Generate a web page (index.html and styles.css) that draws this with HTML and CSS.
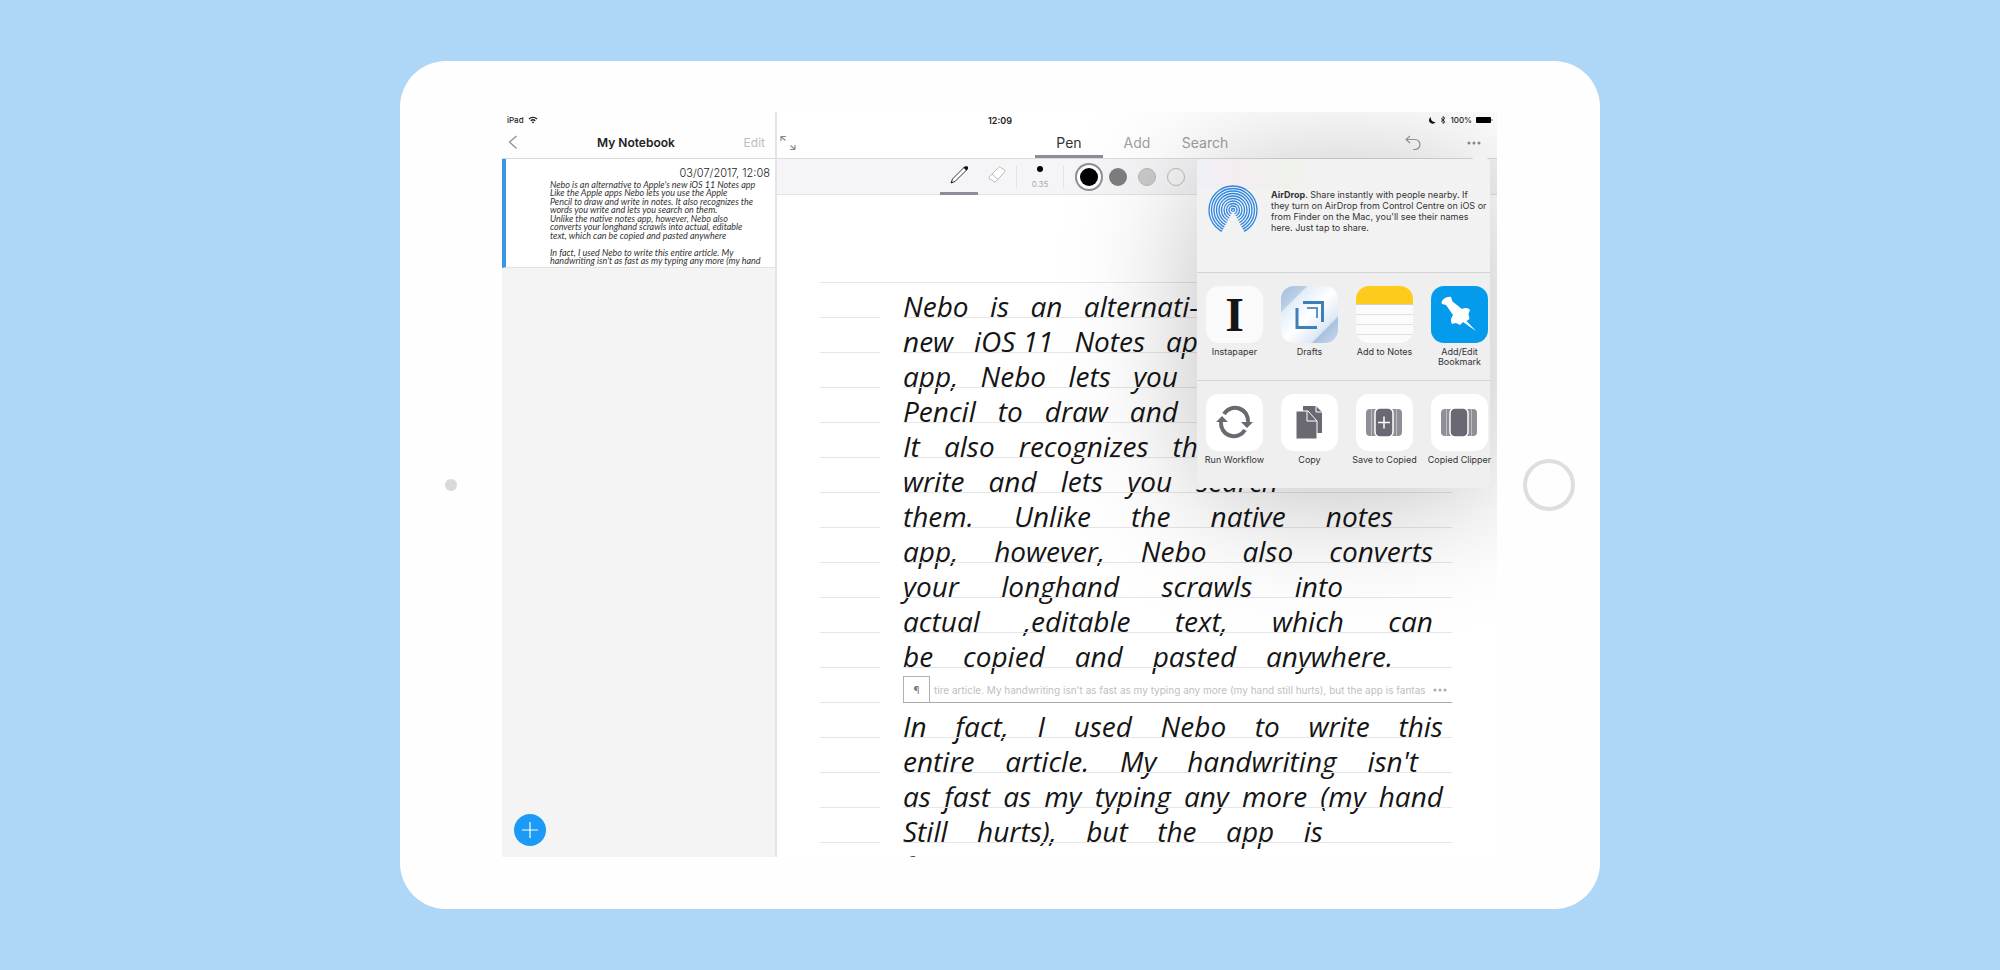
FILE: index.html
```html
<!DOCTYPE html>
<html lang="en">

<head>
    <meta charset="UTF-8">
    <meta name="viewport" content="width=device-width, initial-scale=1.0">
    <title>My Notebook</title>
    <link rel="stylesheet" href="styles.css">
</head>

<body>

    <div class="tablet">
        <span class="camera"></span>

        <div class="screen">
            <!-- Status bar -->
            <div class="status-bar">
                <div class="status-left">
                    iPad
                    <svg width="10" height="8" viewBox="0 0 20 16"><path d="M1 5a13 13 0 0 1 18 0l-2 2a10 10 0 0 0-14 0zM4.500 8.500a8 8 0 0 1 11 0l-2 2a5 5 0 0 0-7 0zM10 15l-2.500-2.800a4 4 0 0 1 5 0z" fill="#222"/></svg>
                </div>
                <div class="status-time">12:09</div>
                <div class="status-right">
                    <svg width="7" height="8" viewBox="0 0 14 16"><path d="M4 2a7 7 0 1 0 9 10A8 8 0 0 1 4 2z" fill="#111"/></svg>
                    <svg width="6" height="8" viewBox="0 0 12 16"><path d="M2 4.500l8 7L6 15V1l4 3.500-8 7" fill="none" stroke="#222" stroke-width="1.800"/></svg>
                    100%
                    <svg width="17" height="8" viewBox="0 0 17 8"><rect x="0" y="1" width="15" height="6" rx="1" fill="#000"/><rect x="15.500" y="3" width="1" height="2" fill="#777"/></svg>
                </div>
            </div>

            <!-- Page list -->
            <aside class="sidebar">
                <header class="sidebar-header">
                    <button class="icon-button" aria-label="Back">
                        <svg width="12" height="16" viewBox="0 0 12 16"><path d="M9.500 2L2.500 8l7 6.500" fill="none" stroke="#8c8c8c" stroke-width="1.200"/></svg>
                    </button>
                    <h1>My Notebook</h1>
                    <button class="edit-button">Edit</button>
                </header>
                <article class="page-card">
                    <time>03/07/2017, 12:08</time>
                    <div class="page-preview">
                        <span>Nebo is an alternative to Apple's new iOS 11 Notes app</span>
                        <span>Like the Apple apps Nebo lets you use the Apple</span>
                        <span>Pencil to draw and write in notes. It also recognizes the</span>
                        <span>words you write and lets you search on them.</span>
                        <span>Unlike the native notes app, however, Nebo also</span>
                        <span>converts your longhand scrawls into actual, editable</span>
                        <span>text, which can be copied and pasted anywhere</span>
                        <span>&nbsp;</span>
                        <span>In fact, I used Nebo to write this entire article. My</span>
                        <span>handwriting isn't as fast as my typing any more (my hand</span>
                    </div>
                </article>
                <button class="add-button" aria-label="New page">
                    <svg width="16" height="16" viewBox="0 0 16 16"><path d="M8 0v16M0 8h16" stroke="#fff" stroke-width="1.200"/></svg>
                </button>
            </aside>

            <main class="editor">
                <header class="editor-header">
                    <button class="icon-button expand-button" aria-label="Full screen">
                        <svg width="16" height="16" viewBox="0 0 16 16"><path d="M1 6V1.500h5M1.500 2l4 3.500M15 10v4.500h-5M14.500 14l-4-3.500" fill="none" stroke="#8a8a8a" stroke-width="1.200"/></svg>
                    </button>
                    <nav class="tabs">
                        <button class="tab active">Pen</button>
                        <button class="tab">Add</button>
                        <button class="tab">Search</button>
                    </nav>
                    <div class="header-actions">
                        <button class="icon-button" aria-label="Undo">
                            <svg width="16" height="16" viewBox="0 0 16 16"><path d="M5 1L1 4.500 5 8M1.500 4.500H10a5 5 0 0 1 0 10H8" fill="none" stroke="#9c9c9c" stroke-width="1.200"/></svg>
                        </button>
                        <button class="icon-button" aria-label="More">
                            <svg width="14" height="4" viewBox="0 0 14 4"><g fill="#8c8c8c"><circle cx="2" cy="2" r="1.500"/><circle cx="7" cy="2" r="1.500"/><circle cx="12" cy="2" r="1.500"/></g></svg>
                        </button>
                    </div>
                </header>

                <div class="toolbar">
                    <button class="tool active" aria-label="Pen">
                        <svg width="20" height="20" viewBox="0 0 20 20"><path d="M2 18l1.500-4L15 2.500l2.500 2.500L6 16.500z" fill="#fff" stroke="#333"/><path d="M2 18l2-.8-1.200-1.200z" fill="#111"/><path d="M14.500 2.500l1.500-1.300 3 .3v2.500l-1.500 1.500z" fill="#111"/></svg>
                    </button>
                    <button class="tool" aria-label="Eraser">
                        <svg width="20" height="20" viewBox="0 0 20 20"><path d="M2 12L11.500 2.500q1-1 2 0l4 2.500q1 1 0 2L9 16.500q-1 1-2 0L2 13.500zM5 9l6 5.500" fill="#fff" stroke="#bbb"/></svg>
                    </button>
                    <button class="pen-size"><i></i>0.35</button>
                    <div class="colors">
                        <button class="color black selected" aria-label="Black"></button>
                        <button class="color grey" aria-label="Grey"></button>
                        <button class="color silver" aria-label="Silver"></button>
                        <button class="color white" aria-label="White"></button>
                    </div>
                </div>

                <!-- Ruled paper -->
                <section class="paper">
                    <div class="first-rule"></div>
                    <div class="row"><p class="w-295"><span>Nebo</span><span>is</span><span>an</span><span>alternati-</span></p></div>
                    <div class="row"><p class="w-295"><span>new</span><span>iOS 11</span><span>Notes</span><span>ap</span></p></div>
                    <div class="row"><p class="w-275"><span>app,</span><span>Nebo</span><span>lets</span><span>you</span></p></div>
                    <div class="row"><p class="w-275"><span>Pencil</span><span>to</span><span>draw</span><span>and</span></p></div>
                    <div class="row"><p class="w-295"><span>It</span><span>also</span><span>recognizes</span><span>th</span></p></div>
                    <div class="row"><p class="w-375"><span>write</span><span>and</span><span>lets</span><span>you</span><span>search</span></p></div>
                    <div class="row"><p class="w-490"><span>them.</span><span>Unlike</span><span>the</span><span>native</span><span>notes</span></p></div>
                    <div class="row"><p class="w-530"><span>app,</span><span>however,</span><span>Nebo</span><span>also</span><span>converts</span></p></div>
                    <div class="row"><p class="w-440"><span>your</span><span>longhand</span><span>scrawls</span><span>into</span></p></div>
                    <div class="row"><p class="w-530"><span>actual</span><span>,editable</span><span>text,</span><span>which</span><span>can</span></p></div>
                    <div class="row"><p class="w-490"><span>be</span><span>copied</span><span>and</span><span>pasted</span><span>anywhere.</span></p></div>
                    <div class="row convert-row">
                        <div class="convert">
                            <button class="paragraph-button" aria-label="Paragraph">¶</button>
                            <span class="convert-text">tire article. My handwriting isn't as fast as my typing any more (my hand still hurts), but the app is fantas</span>
                            <button class="icon-button" aria-label="Paragraph options">
                                <svg width="14" height="4" viewBox="0 0 14 4"><g fill="#aaa"><circle cx="2" cy="2" r="1.500"/><circle cx="7" cy="2" r="1.500"/><circle cx="12" cy="2" r="1.500"/></g></svg>
                            </button>
                        </div>
                    </div>
                    <div class="row"><p class="w-540"><span>In</span><span>fact,</span><span>I</span><span>used</span><span>Nebo</span><span>to</span><span>write</span><span>this</span></p></div>
                    <div class="row"><p class="w-515"><span>entire</span><span>article.</span><span>My</span><span>handwriting</span><span>isn't</span></p></div>
                    <div class="row"><p class="w-540"><span>as</span><span>fast</span><span>as</span><span>my</span><span>typing</span><span>any</span><span>more</span><span>(my</span><span>hand</span></p></div>
                    <div class="row"><p class="w-420"><span>Still</span><span>hurts),</span><span>but</span><span>the</span><span>app</span><span>is</span></p></div>
                    <div class="row"><p>fantastic</p></div>
                </section>
            </main>

            <!-- Share sheet -->
            <div class="share-sheet">
                <div class="airdrop">
                    <svg width="50" height="50" viewBox="0 0 50 50">
                        <g fill="none" stroke="#2f86e0" stroke-width="1.300">
                            <circle cx="25" cy="25" r="24"/><circle cx="25" cy="25" r="21.500"/><circle cx="25" cy="25" r="19"/><circle cx="25" cy="25" r="16.500"/><circle cx="25" cy="25" r="14"/><circle cx="25" cy="25" r="11.500"/><circle cx="25" cy="25" r="9"/><circle cx="25" cy="25" r="6.500"/><circle cx="25" cy="25" r="4"/><circle cx="25" cy="25" r="1.500"/>
                        </g>
                        <path d="M25 26L38 50H12z" fill="#f2f2f3"/>
                    </svg>
                    <p><b>AirDrop</b>. Share instantly with people nearby. If<br>they turn on AirDrop from Control Centre on iOS or<br>from Finder on the Mac, you'll see their names<br>here. Just tap to share.</p>
                </div>

                <div class="share-row">
                    <button class="share-item">
                        <span class="share-icon instapaper">I</span>
                        Instapaper
                    </button>
                    <button class="share-item">
                        <svg class="share-icon" viewBox="0 0 57 57">
                            <defs>
                                <linearGradient id="sky" x1="0" y1="0" x2="1" y2="1">
                                    <stop offset="0" stop-color="#a3bfdc"/><stop offset=".220" stop-color="#b9cfe5"/><stop offset=".240" stop-color="#e2edf8"/><stop offset=".500" stop-color="#fff"/><stop offset=".760" stop-color="#dde8f5"/><stop offset=".780" stop-color="#a9c2de"/><stop offset="1" stop-color="#c8daee"/>
                                </linearGradient>
                            </defs>
                            <rect width="57" height="57" fill="url(#sky)"/>
                            <path d="M16 22v19.500h20M22 16.500h19.500V36" fill="none" stroke="#3c80ba" stroke-width="3"/>
                            <path d="M26 22h10v10" fill="none" stroke="#5e94c4" stroke-width="2"/>
                        </svg>
                        Drafts
                    </button>
                    <button class="share-item">
                        <svg class="share-icon" viewBox="0 0 57 57">
                            <rect width="57" height="57" fill="#fbfbfb"/>
                            <rect width="57" height="18" fill="#fccb1c"/>
                            <path d="M0 18.500h57" stroke="#cfcfcf"/>
                            <path d="M0 28.500h57M0 38.500h57M0 48.500h57" stroke="#e0e0e0"/>
                        </svg>
                        Add to Notes
                    </button>
                    <button class="share-item">
                        <svg class="share-icon" viewBox="0 0 57 57">
                            <rect width="57" height="57" fill="#059bec"/>
                            <path d="M11 18c-2-3 4-8 9-7l1.500 4.500 9.500 7.500c3-2 7-1 8 1l-1.500 4 1 5-3 2L45 45 32 36l-3 3-4-2-4 1c-2-3-1-6 1-9l-7-10z" fill="#fff"/>
                        </svg>
                        Add/Edit<br>Bookmark
                    </button>
                </div>

                <div class="share-row">
                    <button class="share-item">
                        <svg class="share-icon" viewBox="0 0 57 57">
                            <rect width="57" height="57" fill="#fff"/>
                            <path d="M18 20a13 13 0 0 1 24 8M39 36a13 13 0 0 1-24-8" fill="none" stroke="#6a6870" stroke-width="4"/>
                            <path d="M35 28h12l-6 6zM10 28l6-6 6 6z" fill="#6a6870"/>
                        </svg>
                        Run Workflow
                    </button>
                    <button class="share-item">
                        <svg class="share-icon" viewBox="0 0 57 57">
                            <rect width="57" height="57" fill="#fff"/>
                            <path d="M22 12h13l6 6v21H22z" fill="#6a6870"/>
                            <path d="M35 12v6h6" fill="none" stroke="#fff"/>
                            <path d="M15 17h12l9 10v18H15z" fill="#6a6870" stroke="#fff"/>
                            <path d="M26 17v10h10" fill="none" stroke="#fff"/>
                        </svg>
                        Copy
                    </button>
                    <button class="share-item">
                        <svg class="share-icon" viewBox="0 0 57 57">
                            <rect width="57" height="57" fill="#fff"/>
                            <rect x="10" y="15" width="36" height="27" rx="4" fill="#908f97"/>
                            <path d="M15.500 15v27M40.500 15v27" stroke="#fff" stroke-opacity=".4"/>
                            <rect x="19" y="14" width="18" height="29" rx="5" fill="#6a6873" stroke="#fff" stroke-width="1.500"/>
                            <path d="M28 22.500v12M22 28.500h12" stroke="#fff" stroke-width="1.500"/>
                        </svg>
                        Save to Copied
                    </button>
                    <button class="share-item">
                        <svg class="share-icon" viewBox="0 0 57 57">
                            <rect width="57" height="57" fill="#fff"/>
                            <rect x="10" y="15" width="36" height="27" rx="4" fill="#908f97"/>
                            <path d="M15.500 15v27M40.500 15v27" stroke="#fff" stroke-opacity=".4"/>
                            <rect x="19" y="14" width="18" height="29" rx="5" fill="#6a6873" stroke="#fff" stroke-width="1.500"/>
                        </svg>
                        Copied Clipper
                    </button>
                </div>
            </div>
        </div>

        <span class="home-button"></span>
    </div>

</body>

</html>
```

FILE: styles.css
```css
* {
    box-sizing: border-box;
}

body {
    margin: 0;
    min-height: 100vh;
    display: flex;
    justify-content: center;
    align-items: center;
    background-color: #aed6f6;
    font-family: Inter, "Liberation Sans", sans-serif;
    color: #222;
}

button {
    padding: 0;
    border: none;
    background: none;
    font-family: inherit;
    color: inherit;
    cursor: pointer;
}

svg {
    display: block;
}

/* Tablet frame */
.tablet {
    width: 60%;
    min-width: 1100px;
    padding: 51px 0 52px;
    display: grid;
    grid-template-columns: 102px 1fr 103px;
    align-items: center;
    justify-items: center;
    background-color: #fefefe;
    border-radius: 46px;
}

.camera {
    width: 12px;
    height: 12px;
    border-radius: 50%;
    background-color: #d9d9d9;
}

.home-button {
    width: 52px;
    height: 52px;
    border: 4px solid #dedede;
    border-radius: 50%;
}

.screen {
    position: relative;
    width: 100%;
    aspect-ratio: 995 / 745;
    display: grid;
    grid-template-columns: 275px 1fr;
    grid-template-rows: 16px minmax(0, 1fr);
    overflow: hidden;
}

/* Status bar */
.status-bar {
    grid-column: 1 / 3;
    grid-row: 1;
    z-index: 3;
    padding: 0 4px 0 5px;
    display: grid;
    grid-template-columns: 1fr auto 1fr;
    align-items: center;
    font-size: 8px;
    font-weight: 500;
}

.status-left,
.status-right {
    display: flex;
    align-items: center;
    gap: 4px;
}

.status-right {
    justify-content: flex-end;
}

.status-time {
    font-size: 9px;
    font-weight: 600;
}

/* Sidebar */
.sidebar {
    grid-column: 1;
    grid-row: 1 / 3;
    display: flex;
    flex-direction: column;
    background-color: #f4f4f5;
    border-right: 2px solid #e4e4e6;
}

.sidebar-header {
    height: 47px;
    padding: 14px 10px 0 5px;
    display: grid;
    grid-template-columns: 1fr auto 1fr;
    align-items: center;
    background-color: #fefefe;
    border-bottom: 1px solid #d9d9d9;
}

.sidebar-header h1 {
    margin: 0;
    font-size: 12px;
    font-weight: 600;
}

.edit-button {
    justify-self: end;
    font-size: 12px;
    color: #bdbdbd;
}

.page-card {
    height: 109px;
    padding: 6px 5px 0 0;
    overflow: hidden;
    background-color: #fff;
    border-left: 4px solid #3a96e2;
    border-bottom: 1px solid #e2e2e2;
}

.page-card time {
    display: block;
    text-align: right;
    font-size: 11px;
    line-height: 16px;
    font-weight: 300;
}

.page-preview {
    height: 84px;
    margin-left: 44px;
    display: flex;
    flex-direction: column;
    justify-content: space-between;
    font-family: Lato, sans-serif;
    font-size: 9px;
    line-height: 8px;
    font-style: italic;
    color: #333;
    white-space: nowrap;
}

.add-button {
    width: 32px;
    height: 32px;
    margin: auto 0 11px 12px;
    display: grid;
    place-items: center;
    border-radius: 50%;
    background-color: #1b9af7;
}

/* Editor */
.editor {
    grid-column: 2;
    grid-row: 1 / 3;
    display: flex;
    flex-direction: column;
    min-height: 0;
    background-color: #fff;
}

.editor-header {
    flex: none;
    height: 47px;
    padding-top: 15px;
    display: grid;
    grid-template-columns: 1fr auto 1fr;
    border-bottom: 1px solid #dcdcde;
}

.expand-button {
    justify-self: start;
    padding-left: 3px;
}

.tabs {
    display: flex;
}

.tab {
    width: 68px;
    padding-top: 2px;
    font-size: 14px;
    color: #a0a0a0;
    border-bottom: 3px solid transparent;
}

.tab.active {
    color: #333;
    border-color: #8e8c96;
}

.header-actions {
    display: flex;
    align-items: center;
    justify-content: flex-end;
    gap: 46px;
    padding-right: 16px;
}

.toolbar {
    flex: none;
    height: 36px;
    padding-left: 163px;
    display: flex;
    align-items: center;
    background-color: #f5f5f7;
    border-bottom: 1px solid #e2e2e4;
}

.tool {
    width: 38px;
    height: 36px;
    display: grid;
    place-items: center;
    border-bottom: 3px solid transparent;
}

.tool.active {
    border-color: #8e8c96;
}

.pen-size {
    width: 48px;
    height: 22px;
    display: flex;
    flex-direction: column;
    align-items: center;
    justify-content: space-between;
    border: solid #e4e4e6;
    border-width: 0 1px;
    font-size: 8px;
    line-height: 8px;
    color: #aaa;
}

.pen-size i {
    width: 6px;
    height: 6px;
    border-radius: 50%;
    background-color: #000;
}

.colors {
    display: flex;
    align-items: center;
    gap: 11px;
    padding-left: 16px;
}

.color {
    width: 18px;
    height: 18px;
    border-radius: 50%;
}

.black {
    background-color: #000;
}

.grey {
    background-color: #7e7e7e;
}

.silver {
    background-color: #cbcbcb;
    border: 1px solid #b8b8b8;
}

.white {
    background-color: #f6f6f6;
    border: 1px solid #bcbcbc;
}

.color.selected {
    box-shadow: 0 0 0 3px #fff, 0 0 0 5px #8b9097;
}

/* Ruled paper with the handwritten note */
.paper {
    flex: 1;
    min-height: 0;
    padding: 0 45px 0 43px;
    overflow: hidden;
}

.first-rule {
    height: 88px;
    border-bottom: 1px solid #e6e6e6;
}

.row {
    height: 35px;
    display: grid;
    grid-template-columns: 60px minmax(0, 1fr);
    grid-template-rows: 35px;
    column-gap: 23px;
}

.row::before {
    content: "";
    border-bottom: 1px solid #e6e6e6;
}

.row::after {
    content: "";
    grid-column: 2;
    grid-row: 1;
    border-bottom: 1px solid #e6e6e6;
}

.row > p,
.row > .convert {
    grid-column: 2;
    grid-row: 1;
}

.row p {
    margin: 0;
    display: flex;
    justify-content: space-between;
    font-family: "Open Sans", "Noto Sans", sans-serif;
    font-size: 28px;
    line-height: 46px;
    font-style: italic;
    color: #151515;
    white-space: nowrap;
}

/* Line lengths */
.w-275 { width: 275px; }
.w-295 { width: 295px; }
.w-375 { width: 375px; }
.w-420 { width: 420px; }
.w-440 { width: 440px; }
.w-490 { width: 490px; }
.w-515 { width: 515px; }
.w-530 { width: 530px; }
.w-540 { width: 540px; }

.convert-row::after {
    border-color: #aaa;
}

.convert {
    align-self: end;
    height: 27px;
    display: flex;
    align-items: center;
    gap: 4px;
    padding-right: 5px;
}

.paragraph-button {
    flex: none;
    width: 27px;
    height: 27px;
    border: 1px solid #b0b0b0;
    background-color: #fff;
    font-size: 10px;
    color: #777;
}

.convert-text {
    flex: 1;
    font-size: 10px;
    color: #c0c0c0;
    white-space: nowrap;
}

/* Share sheet */
.share-sheet {
    position: absolute;
    top: 47px;
    right: 7px;
    width: 293px;
    background: linear-gradient(90deg, #eef1f8, #f5edf1 12%, #eff2eb 32%, #f2f2f3 40%) top / 100% 30px no-repeat #f2f2f3;
    border-radius: 3px 3px 8px 8px;
    box-shadow: 0 10px 130px rgba(0, 0, 0, 0.26);
    color: #333;
}

.share-sheet::before {
    content: "";
    position: absolute;
    top: -6px;
    right: 2px;
    border: solid transparent;
    border-width: 0 8px 6px;
    border-bottom-color: #f2f2f3;
}

.airdrop {
    height: 113px;
    padding: 26px 4px 0 11px;
    display: flex;
    gap: 13px;
}

.airdrop svg {
    flex: none;
}

.airdrop p {
    margin: 4px 0 0;
    font-size: 9px;
    line-height: 11px;
    white-space: nowrap;
}

.share-row {
    height: 108px;
    padding-top: 13px;
    display: flex;
    border-top: 1px solid #d4d4d6;
    background-color: #efeff0;
}

.share-row:last-child {
    border-radius: 0 0 8px 8px;
}

.share-item {
    flex: none;
    width: 75px;
    display: flex;
    flex-direction: column;
    align-items: center;
    font-size: 9px;
    line-height: 10px;
    white-space: nowrap;
}

.share-icon {
    width: 57px;
    height: 57px;
    margin-bottom: 4px;
    border-radius: 13px;
}

.instapaper {
    display: grid;
    place-items: center;
    background-color: #fafafa;
    font-family: "Liberation Serif", serif;
    font-size: 48px;
    line-height: 57px;
    font-weight: bold;
    color: #151515;
}
```
